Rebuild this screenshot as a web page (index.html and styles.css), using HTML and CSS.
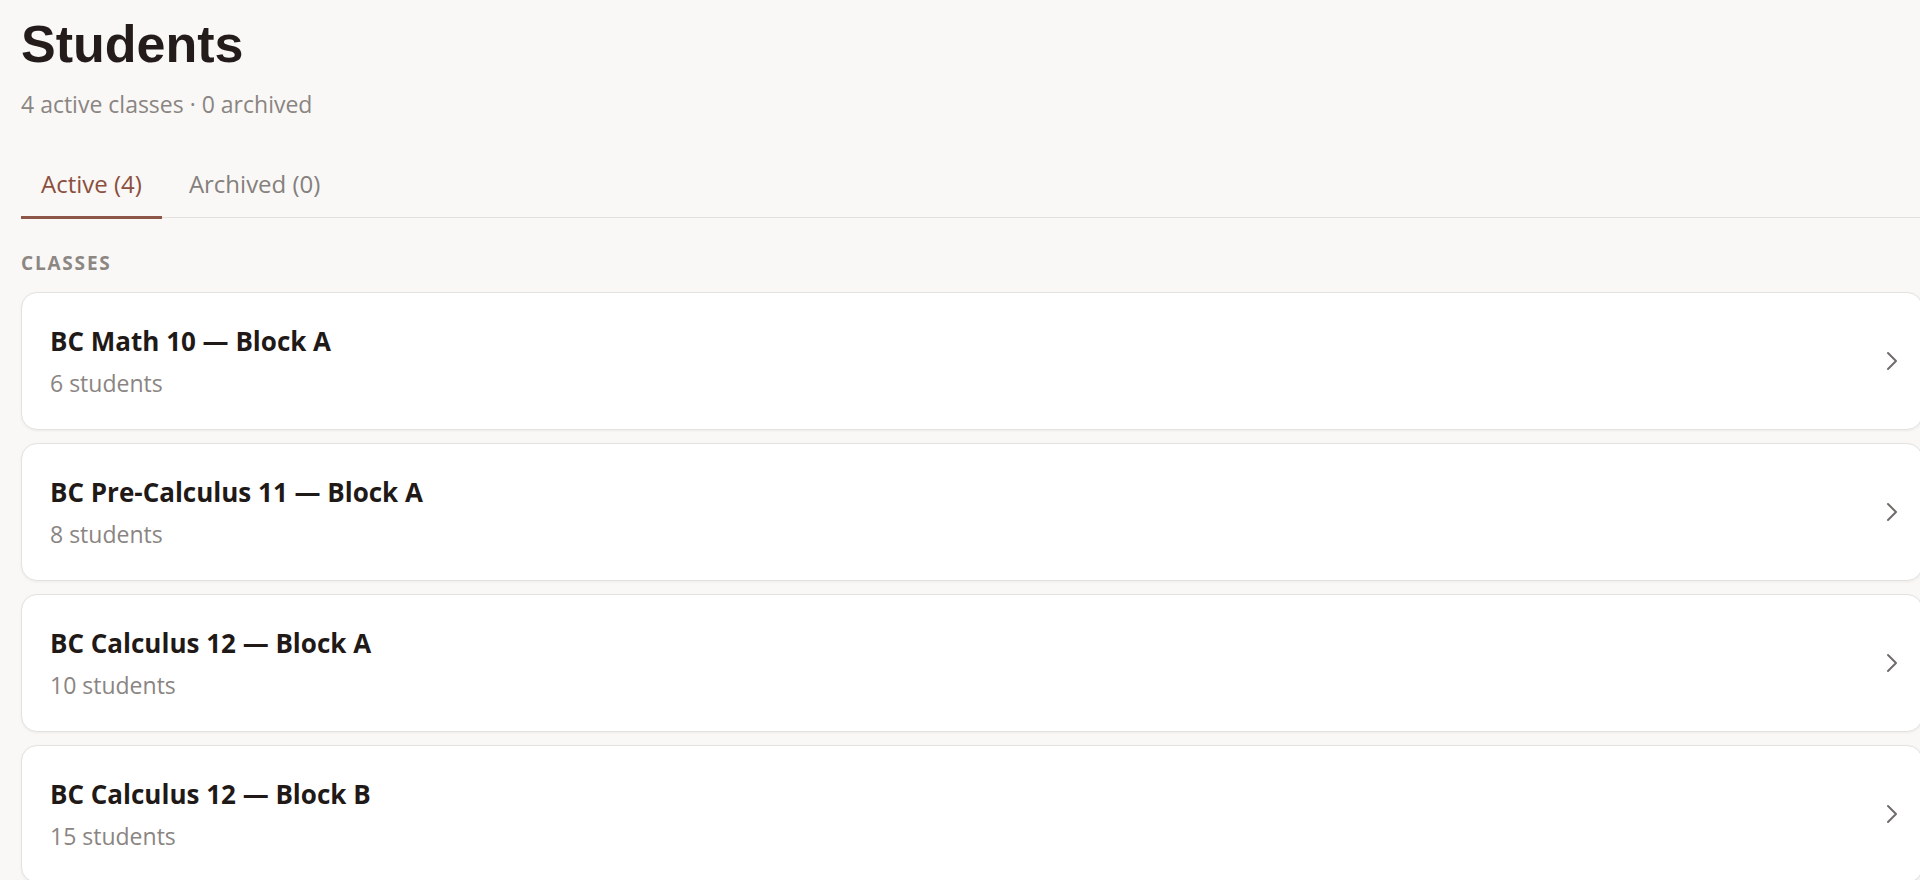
FILE: index.html
```html
<!DOCTYPE html>
<html lang="en">
<head>
<meta charset="utf-8">
<title>Students</title>
<link rel="stylesheet" href="styles.css">
</head>
<body>
<main class="page">
  <header class="page-header">
    <h1 class="page-title">Students</h1>
    <p class="page-sub">4 active classes · 0 archived</p>
  </header>
  <nav class="tabs">
    <a class="tab tab-active">Active (4)</a>
    <a class="tab">Archived (0)</a>
  </nav>
  <h2 class="section-label">CLASSES</h2>
  <ul class="class-list">
    <li class="class-card">
      <div class="class-info">
        <div class="class-name">BC Math 10 — Block A</div>
        <div class="class-count">6 students</div>
      </div>
      <svg class="chevron" width="12" height="20" viewBox="0 0 12 20"><polyline points="2,2 10,10 2,18" fill="none" stroke="currentColor" stroke-width="2" stroke-linecap="round" stroke-linejoin="round"/></svg>
    </li>
    <li class="class-card">
      <div class="class-info">
        <div class="class-name">BC Pre-Calculus 11 — Block A</div>
        <div class="class-count">8 students</div>
      </div>
      <svg class="chevron" width="12" height="20" viewBox="0 0 12 20"><polyline points="2,2 10,10 2,18" fill="none" stroke="currentColor" stroke-width="2" stroke-linecap="round" stroke-linejoin="round"/></svg>
    </li>
    <li class="class-card">
      <div class="class-info">
        <div class="class-name">BC Calculus 12 — Block A</div>
        <div class="class-count">10 students</div>
      </div>
      <svg class="chevron" width="12" height="20" viewBox="0 0 12 20"><polyline points="2,2 10,10 2,18" fill="none" stroke="currentColor" stroke-width="2" stroke-linecap="round" stroke-linejoin="round"/></svg>
    </li>
    <li class="class-card">
      <div class="class-info">
        <div class="class-name">BC Calculus 12 — Block B</div>
        <div class="class-count">15 students</div>
      </div>
      <svg class="chevron" width="12" height="20" viewBox="0 0 12 20"><polyline points="2,2 10,10 2,18" fill="none" stroke="currentColor" stroke-width="2" stroke-linecap="round" stroke-linejoin="round"/></svg>
    </li>
  </ul>
</main>
</body>
</html>
```
FILE: styles.css
```css
html {
  overflow: hidden;
}
body {
  margin: 0;
  background: #f9f8f6;
  font-family: "Open Sans", "Noto Sans", sans-serif;
  color: #221b19;
}
.page {
  padding: 14px 0 0 21px;
  margin-right: -3px;
}
.page-title {
  margin: 0;
  font-family: "Liberation Sans", Arial, sans-serif;
  font-weight: 700;
  font-size: 52px;
  line-height: 61px;
  color: #231c1a;
}
.page-sub {
  margin: 14px 0 0;
  font-size: 23px;
  line-height: 30px;
  color: #8a8582;
}
.tabs {
  display: flex;
  gap: 7px;
  margin-top: 49px;
  border-bottom: 1px solid #e2dfdc;
}
.tab {
  padding: 0 20px 17px;
  font-size: 24px;
  line-height: 31px;
  color: #85807c;
  border-bottom: 3px solid transparent;
  margin-bottom: -2px;
}
.tab-active {
  color: #8b4f3d;
  border-bottom-color: #8d5646;
}
.section-label {
  margin: 32px 0 0;
  font-size: 19px;
  line-height: 26px;
  font-weight: 700;
  letter-spacing: 1.8px;
  color: #8c8783;
}
.class-list {
  list-style: none;
  margin: 16px 0 0;
  padding: 0;
  display: flex;
  flex-direction: column;
  gap: 13px;
}
.class-card {
  display: flex;
  align-items: center;
  justify-content: space-between;
  background: #ffffff;
  border: 1px solid #e4e1de;
  border-radius: 16px;
  box-shadow: 0 1px 3px rgba(0, 0, 0, 0.05);
  padding: 30px 24px 30px 28px;
}
.class-info {
  display: flex;
  flex-direction: column;
  gap: 8px;
}
.class-name {
  font-size: 26px;
  line-height: 36px;
  font-weight: 700;
  color: #1f1917;
}
.class-count {
  font-size: 23px;
  line-height: 32px;
  color: #8a8582;
}
.chevron {
  color: #6f6c6a;
  flex: none;
}
```
